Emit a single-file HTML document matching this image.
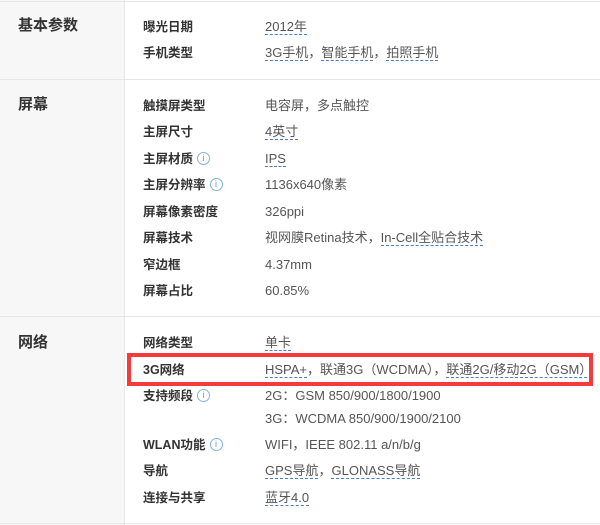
<!DOCTYPE html>
<html><head><meta charset="utf-8"><style>
*{margin:0;padding:0;box-sizing:border-box}
body{width:600px;height:525px;background:#fff;position:relative;overflow:hidden;font-family:"Liberation Sans","Noto Sans CJK SC",sans-serif;font-size:12px}
.left{position:absolute;left:0;top:0;width:125px;height:525px;background:#f7f7f7;border-right:1px solid #e8e8e8}
.hl{position:absolute;left:0;width:600px;height:1px;background:#e6e6e6}
.t{position:absolute;left:18px;font-size:15px;font-weight:bold;color:#333;line-height:20px}
.l{position:absolute;left:143px;color:#333;font-weight:bold;line-height:16px;white-space:nowrap;font-size:12.5px}
.v{position:absolute;left:265px;color:#555;line-height:16px;white-space:nowrap;font-size:13px}
.u{border-bottom:1px dashed #4a7fc8}
.i{display:inline-block;width:13px;height:13px;border:1px solid #7fb0e8;border-radius:50%;color:#5a9be0;font-size:9px;line-height:11px;text-align:center;font-weight:normal;margin-left:4px;vertical-align:top;margin-top:1px}
.red{position:absolute;left:127px;top:353px;width:466px;height:33px;border:4px solid #f43a3a}
</style></head><body>
<div class="left"></div>
<div class="hl" style="top:1px"></div>
<div class="hl" style="top:79px"></div>
<div class="hl" style="top:316px"></div>
<div class="hl" style="top:523px"></div>
<div class="t" style="top:16px">基本参数</div>
<div class="l" style="top:19px">曝光日期</div><div class="v" style="top:19px"><span class="u">2012年</span></div>
<div class="l" style="top:45px">手机类型</div><div class="v" style="top:45px"><span class="u">3G手机</span>，<span class="u">智能手机</span>，<span class="u">拍照手机</span></div>
<div class="t" style="top:95px">屏幕</div>
<div class="l" style="top:98px">触摸屏类型</div><div class="v" style="top:98px">电容屏，多点触控</div>
<div class="l" style="top:124px">主屏尺寸</div><div class="v" style="top:124px"><span class="u">4英寸</span></div>
<div class="l" style="top:151px">主屏材质<span class="i">i</span></div><div class="v" style="top:151px"><span class="u">IPS</span></div>
<div class="l" style="top:177px">主屏分辨率<span class="i">i</span></div><div class="v" style="top:177px">1136x640像素</div>
<div class="l" style="top:204px">屏幕像素密度</div><div class="v" style="top:204px">326ppi</div>
<div class="l" style="top:230px">屏幕技术</div><div class="v" style="top:230px">视网膜Retina技术，<span class="u">In-Cell全贴合技术</span></div>
<div class="l" style="top:257px">窄边框</div><div class="v" style="top:257px">4.37mm</div>
<div class="l" style="top:283px">屏幕占比</div><div class="v" style="top:283px">60.85%</div>
<div class="t" style="top:333px">网络</div>
<div class="l" style="top:335px">网络类型</div><div class="v" style="top:335px"><span class="u">单卡</span></div>
<div class="l" style="top:362px">3G网络</div><div class="v" style="top:362px"><span class="u">HSPA+</span>，联通3G（WCDMA），<span class="u">联通2G/移动2G（GSM）</span></div>
<div class="red"></div>
<div class="l" style="top:388px">支持频段<span class="i">i</span></div><div class="v" style="top:388px">2G：GSM 850/900/1800/1900</div>
<div class="v" style="top:411px">3G：WCDMA 850/900/1900/2100</div>
<div class="l" style="top:437px">WLAN功能<span class="i">i</span></div><div class="v" style="top:437px">WIFI，IEEE 802.11 a/n/b/g</div>
<div class="l" style="top:463px">导航</div><div class="v" style="top:463px"><span class="u">GPS导航</span>，<span class="u">GLONASS导航</span></div>
<div class="l" style="top:490px">连接与共享</div><div class="v" style="top:490px"><span class="u">蓝牙4.0</span></div>
</body></html>
